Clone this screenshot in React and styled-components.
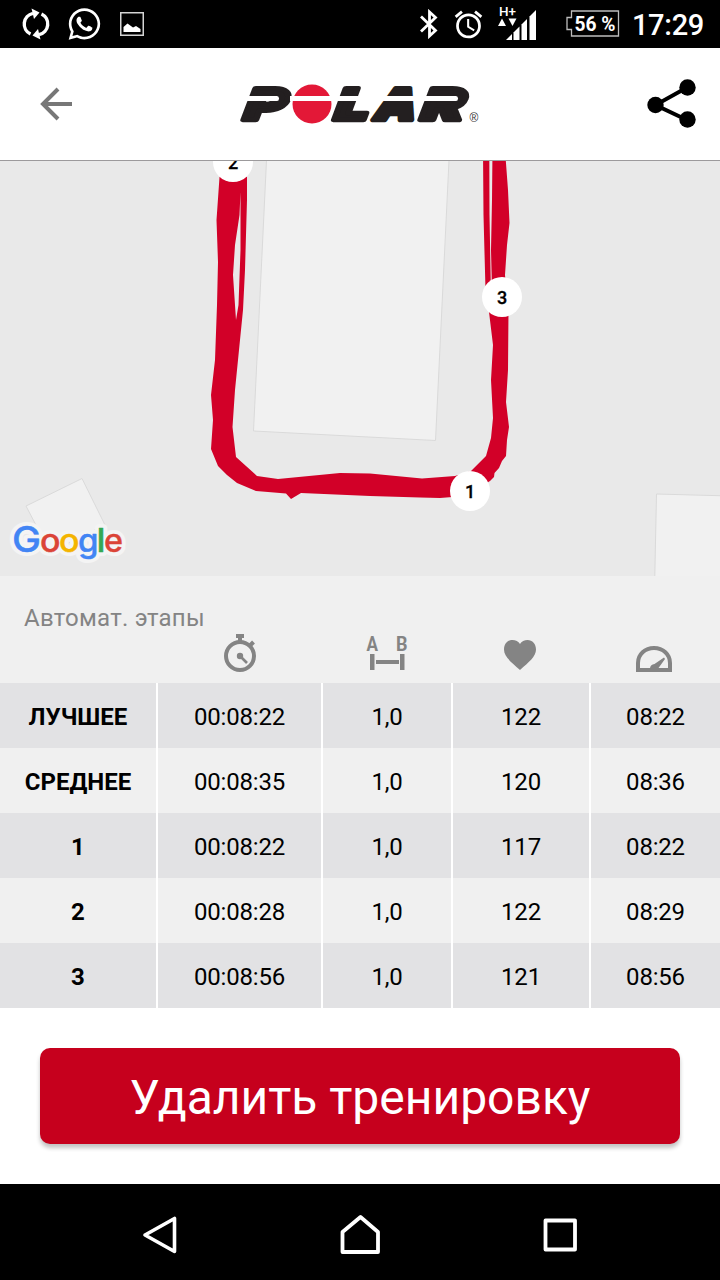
import { FaWhatsapp } from "react-icons/fa"
import { MdAlarm } from "react-icons/md"
import styled, { createGlobalStyle } from "styled-components"

const GlobalStyle = createGlobalStyle`
  * {
    box-sizing: border-box;
  }
  body {
    margin: 0;
    background: #fff;
    font-family: Roboto, "Noto Sans", sans-serif;
  }
  svg {
    display: block;
    flex: none;
  }
`

const Screen = styled.div`
  display: flex;
  flex-direction: column;
  width: 720px;
  height: 1280px;
  overflow: hidden;
  background: #fff;
`

const StatusBar = styled.div`
  display: flex;
  justify-content: space-between;
  height: 48px;
  padding: 0 16px 0 22px;
  background: #000;
  color: #fff;
`

const StatusGroup = styled.div`
  display: flex;
  align-items: center;
  gap: ${({ $gap }) => $gap}px;
`

const Clock = styled.div`
  padding-top: 2px;
  font-size: 29px;
  font-weight: 500;
  line-height: 34px;
  letter-spacing: -0.3px;
`

const Header = styled.header`
  display: flex;
  align-items: center;
  justify-content: space-between;
  height: 113px;
  padding: 0 23px 1px 40px;
  border-bottom: 1px solid #9c9a9c;
  background: #fff;
`

const Brand = styled.div`
  margin-right: 17px;
`

const IconButton = styled.button`
  display: flex;
  width: 50px;
  padding: 0;
  border: 0;
  background: none;
  justify-content: ${({ $align }) => $align || "flex-start"};
`

const MapView = styled.div`
  height: 415px;
  background: #e9e9e9;
`

const columns = "156px 163px 128px 136px 129px"

const Laps = styled.section`
  background: #f0f0f0;
`

const LapsTitle = styled.div`
  height: 58px;
  padding: 28px 24px 0;
  color: #848484;
  font-size: 24px;
  line-height: 28px;
  letter-spacing: 0.25px;
`

const LapsHead = styled.div`
  display: grid;
  grid-template-columns: ${columns};
  grid-template-rows: 38px;
  column-gap: 2px;
  align-items: end;
  justify-items: center;
  height: 49px;
  padding-bottom: 11px;
`

const HeadCell = styled.div`
  grid-column: ${({ $col }) => $col};
  padding-right: ${({ $shift }) => $shift || 0}px;
  padding-bottom: ${({ $lift }) => $lift || 0}px;
`

const LapRow = styled.div`
  display: grid;
  grid-template-columns: ${columns};
  column-gap: 2px;
  height: 65px;
  background: #fff;
`

const LapCell = styled.div`
  display: flex;
  align-items: center;
  justify-content: center;
  padding-top: 3px;
  background: ${({ $dark }) => ($dark ? "#e2e2e4" : "#f0f0f0")};
  color: #000;
  font-size: 24px;
  font-weight: ${({ $bold }) => ($bold ? 700 : 400)};
  letter-spacing: ${({ $bold }) => ($bold ? 0 : -0.2)}px;
`

const Actions = styled.div`
  height: 176px;
  padding: 40px;
`

const DeleteButton = styled.button`
  width: 100%;
  height: 96px;
  padding: 3px 0 0;
  border: 0;
  border-radius: 10px;
  background: #c6001d;
  box-shadow: 0 4px 4px rgba(0, 0, 0, 0.24);
  color: #fff;
  font-family: inherit;
  font-size: 48px;
`

const NavBar = styled.nav`
  display: flex;
  align-items: center;
  justify-content: space-between;
  height: 96px;
  padding: 6px 141px 0;
  background: #000;
`

const SyncIcon = () => (
  <svg width="28" height="32" viewBox="0 0 28 32" fill="none" stroke="#fff" strokeWidth="3.400">
    <path d="M8.500 26A11 11 0 0 1 11 5.300" />
    <path d="M19.500 6A11 11 0 0 1 17 26.700" />
    <path d="M9.500 0.500L17.500 4.500L12 11Z" fill="#fff" stroke="none" />
    <path d="M18.500 31.500L10.500 27.500L16 21Z" fill="#fff" stroke="none" />
  </svg>
)

const PictureIcon = () => (
  <svg width="24" height="24" viewBox="0 0 24 24">
    <rect x="0.750" y="0.750" width="22.500" height="22.500" fill="none" stroke="#d4d4d4" strokeWidth="1.500" />
    <path d="M3.500 20V15L7.500 11.500L13 15.500L16 14L20.500 17V20Z" fill="#fff" />
  </svg>
)

const BluetoothIcon = () => (
  <svg width="20" height="30" viewBox="0 0 20 30" fill="none" stroke="#fff" strokeWidth="2.800">
    <path d="M2 7.500L16.500 21.500L10.500 27V3L16.500 8.500L2 22.500" />
  </svg>
)

const SignalIcon = () => (
  <svg width="40" height="44" viewBox="0 -4 40 44" fill="#fff">
    <text x="1" y="10" fontFamily="Roboto" fontSize="13.500" fontWeight="500" textLength="17" lengthAdjust="spacingAndGlyphs">
      H+
    </text>
    <path d="M0 20L4 12.500L8 20Z" />
    <path d="M10.500 12.500H18.500L14.500 20Z" />
    <path d="M8 34L14 28V34Z" />
    <path d="M15.500 26.500L21.500 20.500V34H15.500Z" />
    <path d="M23.500 18.500L29 13V34H23.500Z" />
    <path d="M31.500 10.500L38 4V34H31.500Z" />
  </svg>
)

const Battery = styled.div`
  margin: 0 -1px 0 15px;
`

const BatteryIcon = () => (
  <svg width="54" height="28" viewBox="0 0 54 28">
    <path
      d="M5.500 1H52.500V26H5.500V19.500H1V7.500H5.500Z"
      fill="none"
      stroke="#bdbdbd"
      strokeWidth="1.300"
    />
    <text x="8.500" y="20.500" fill="#fff" fontFamily="Roboto" fontSize="20" fontWeight="700" textLength="41" lengthAdjust="spacingAndGlyphs">
      56 %
    </text>
  </svg>
)

const BackIcon = () => (
  <svg width="33" height="34" viewBox="0 0 33 34" fill="none" stroke="#777" strokeWidth="4">
    <path d="M32 17H3M18 2L3 17L18 32" />
  </svg>
)

const ShareIcon = () => (
  <svg width="50" height="50" viewBox="0 0 50 50">
    <path d="M40 8.500L8.500 26L40 41" fill="none" stroke="#000" strokeWidth="4" />
    <circle cx="8.500" cy="26" r="8.200" />
    <circle cx="40.500" cy="8.500" r="8.200" />
    <circle cx="40.500" cy="40.500" r="8.200" />
  </svg>
)

const logoLetters = [
  { char: "P", x: 3.5, width: 41 },
  { char: "L", x: 94, width: 34 },
  { char: "A", x: 134, width: 41 },
  { char: "R", x: 180.5, width: 42 },
]

const PolarLogo = () => (
  <svg width="250" height="66" viewBox="-5 -12 250 66">
    {logoLetters.map((l) => (
      <text
        key={l.char}
        transform={`translate(${l.x} 36.500) skewX(-8)`}
        fill="#231f20"
        stroke="#231f20"
        strokeWidth="4.600"
        strokeLinejoin="round"
        fontFamily="Inter"
        fontSize="43.500"
        fontStyle="italic"
        fontWeight="900"
        textLength={l.width}
        lengthAdjust="spacingAndGlyphs"
      >
        {l.char}
      </text>
    ))}
    <circle cx="72" cy="21" r="19.500" fill="#e31837" />
    <path d="M0 13H37Q39 13 39 15.500Q39 18 37 18H0Z" fill="#fff" />
    <path d="M50 13H182V18H50Z" fill="#fff" />
    <path d="M182 13H216Q218 13 218 15.500Q218 18 216 18H182Z" fill="#fff" />
    <text x="229.500" y="38.500" fill="#333" fontFamily="Liberation Sans" fontSize="12">
      ®
    </text>
  </svg>
)

const StopwatchIcon = () => (
  <svg width="34" height="38" viewBox="0 0 34 38" fill="none" stroke="#848484">
    <circle cx="17" cy="22" r="14" strokeWidth="4" />
    <path d="M13 2H21" strokeWidth="4" />
    <path d="M17 3V8" strokeWidth="4" />
    <path d="M26.500 12L30.500 8" strokeWidth="4" />
    <path d="M17 22L24 29" strokeWidth="2.600" />
    <circle cx="17" cy="22" r="3.200" fill="#848484" stroke="none" />
  </svg>
)

const DistanceIcon = () => (
  <svg width="42" height="42" viewBox="0 -6 42 42" fill="#848484">
    <text x="0.500" y="15.500" fontFamily="Roboto" fontSize="20" fontWeight="700" textLength="11.500" lengthAdjust="spacingAndGlyphs">
      A
    </text>
    <text x="30" y="15.500" fontFamily="Roboto" fontSize="20" fontWeight="700" textLength="11.500" lengthAdjust="spacingAndGlyphs">
      B
    </text>
    <path d="M4 19H8.500V35H4ZM34 19H38.500V35H34ZM10 25H33V29H10Z" />
  </svg>
)

const HeartIcon = () => (
  <svg width="32" height="30" viewBox="0 0 32 30" fill="#848484">
    <path d="M16 30C7 22 0 16.500 0 9.500C0 4 3.500 0 8.500 0C11.500 0 14.500 1.500 16 4C17.500 1.500 20.500 0 23.500 0C28.500 0 32 4 32 9.500C32 16.500 25 22 16 30Z" />
  </svg>
)

const GaugeIcon = () => (
  <svg width="36" height="26" viewBox="0 0 36 26">
    <path d="M2 24V17C2 8.500 9 2 18 2S34 8.500 34 17V24Z" fill="none" stroke="#848484" strokeWidth="4" />
    <path d="M14 22Q14.500 18.500 18.500 18L28 11.500L29 13L22.500 22Z" fill="#848484" />
  </svg>
)

const pins = [
  { label: "2", x: 233, y: 162 },
  { label: "3", x: 502, y: 297 },
  { label: "1", x: 470, y: 491 },
]

const googleLetters = [
  { char: "G", x: 12, width: 29, size: 36, color: "#4285f4" },
  { char: "o", x: 40, width: 20.5, size: 32, color: "#db4437" },
  { char: "o", x: 59, width: 20.5, size: 32, color: "#f4b400" },
  { char: "g", x: 78, width: 20.5, size: 32, color: "#4285f4" },
  { char: "l", x: 96.5, width: 9, size: 33, color: "#34a853" },
  { char: "e", x: 104, width: 19, size: 32, color: "#db4437" },
]

const GoogleLetter = styled.text`
  font-family: Inter, sans-serif;
  font-weight: 500;
  stroke-linejoin: round;
`

const RouteMap = () => (
  <svg width="720" height="415" viewBox="0 161 720 415">
    <g fill="#f1f1f1" stroke="#dadada">
      <path d="M267 150L449.500 150L435.500 440.500L253.500 431Z" />
      <path d="M26 506L82 478.500L105 525L50 552Z" />
      <path d="M656.500 494L730 496V590H654.500Z" />
    </g>
    <path
      fill="#d20028"
      fillRule="evenodd"
      d="M220 170L216.500 220L218 262L217 305L215 360L211 395L213 420L211 449L218 466L227 475L237 483L256 491L286 493.500L291 499L301 493L370 496L420 497.500L440 498L465 496L490 481L494 477L494.500 473L499 468L502 461L506 456L507 440L509 427L506 402L508 370L508.500 310L505 275L507 245L509.500 223L508 190L505 150H492.500L492 200L491 250L492 290L490.800 285L489.500 215L489.300 150H483L483.500 215L485.500 290L489 312L493 345L491 380L493 418L491 438L486 456L471 471L455 476L422 478.500L370 473.500L340 473L278 479L257 476L236 457L232.500 427L235 390L239 350L243 310L245 270L247 200V170ZM240.500 192V250L238.500 305L236 320L233 275L235 245L239.500 215Z"
    />
    {pins.map((pin) => (
      <g key={pin.label}>
        <circle cx={pin.x} cy={pin.y} r="20" fill="#fff" />
        <text
          x={pin.x + 0.2}
          y={pin.y + 6.5}
          textAnchor="middle"
          fontFamily="Roboto"
          fontSize="18"
          fontWeight="500"
          stroke="#000"
          strokeWidth="0.300"
        >
          {pin.label}
        </text>
      </g>
    ))}
    <g stroke="#f4f4f4" strokeWidth="8" aria-hidden="true">
      {googleLetters.map((l) => (
        <GoogleLetter key={l.x} x={l.x} y="552" fill="#f4f4f4" fontSize={l.size} textLength={l.width} lengthAdjust="spacingAndGlyphs">
          {l.char}
        </GoogleLetter>
      ))}
    </g>
    {googleLetters.map((l) => (
      <GoogleLetter
        key={l.x}
        x={l.x}
        y="552"
        fill={l.color}
        stroke={l.color}
        strokeWidth="0.400"
        fontSize={l.size}
        textLength={l.width}
        lengthAdjust="spacingAndGlyphs"
      >
        {l.char}
      </GoogleLetter>
    ))}
  </svg>
)

const laps = [
  ["ЛУЧШЕЕ", "00:08:22", "1,0", "122", "08:22"],
  ["СРЕДНЕЕ", "00:08:35", "1,0", "120", "08:36"],
  ["1", "00:08:22", "1,0", "117", "08:22"],
  ["2", "00:08:28", "1,0", "122", "08:29"],
  ["3", "00:08:56", "1,0", "121", "08:56"],
]

const App = () => {
  return (
    <Screen>
      <GlobalStyle />
      <StatusBar>
        <StatusGroup $gap={17}>
          <SyncIcon />
          <FaWhatsapp size={36} viewBox="8 0 448 512" />
          <PictureIcon />
        </StatusGroup>
        <StatusGroup $gap={13}>
          <BluetoothIcon />
          <MdAlarm size={33} />
          <SignalIcon />
          <Battery>
            <BatteryIcon />
          </Battery>
          <Clock>17:29</Clock>
        </StatusGroup>
      </StatusBar>

      <Header>
        <IconButton aria-label="Назад">
          <BackIcon />
        </IconButton>
        <Brand>
          <PolarLogo />
        </Brand>
        <IconButton aria-label="Поделиться" $align="flex-end">
          <ShareIcon />
        </IconButton>
      </Header>

      <MapView>
        <RouteMap />
      </MapView>

      <Laps>
        <LapsTitle>Автомат. этапы</LapsTitle>
        <LapsHead>
          <HeadCell $col={2}>
            <StopwatchIcon />
          </HeadCell>
          <HeadCell $col={3} $lift={1}>
            <DistanceIcon />
          </HeadCell>
          <HeadCell $col={4} $lift={2} $shift={2}>
            <HeartIcon />
          </HeadCell>
          <HeadCell $col={5} $shift={3}>
            <GaugeIcon />
          </HeadCell>
        </LapsHead>
        {laps.map((lap, row) => (
          <LapRow key={lap[0]}>
            {lap.map((value, col) => (
              <LapCell key={col} $dark={row % 2 === 0} $bold={col === 0}>
                {value}
              </LapCell>
            ))}
          </LapRow>
        ))}
      </Laps>

      <Actions>
        <DeleteButton>Удалить тренировку</DeleteButton>
      </Actions>

      <NavBar>
        <svg width="38" height="40" viewBox="0 0 38 40" fill="none" stroke="#fff" strokeWidth="3.600" strokeLinejoin="round">
          <path d="M4 20L33.500 3.500V36.500Z" />
        </svg>
        <svg width="42" height="40" viewBox="0 0 42 40" fill="none" stroke="#fff" strokeWidth="3.800" strokeLinejoin="round">
          <path d="M3.500 17L21.500 2L39 17V37H3.500Z" />
        </svg>
        <svg width="38" height="40" viewBox="0 0 38 40" fill="none" stroke="#fff" strokeWidth="3.800" strokeLinejoin="round">
          <path d="M4.500 5.500H34V34.500H4.500Z" />
        </svg>
      </NavBar>
    </Screen>
  )
}

export default App
